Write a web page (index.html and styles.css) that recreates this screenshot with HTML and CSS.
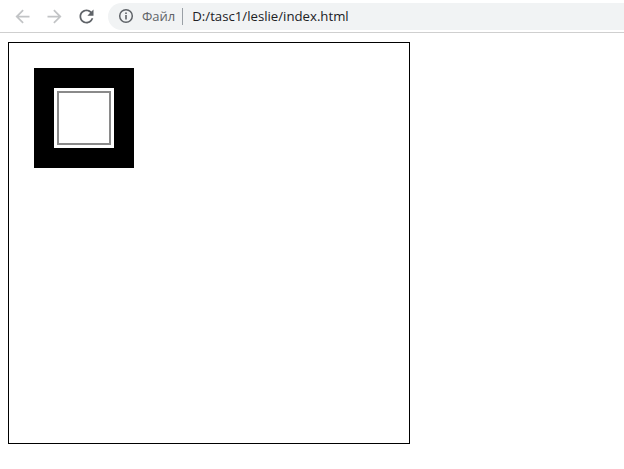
FILE: index.html
```html
<!DOCTYPE html>
<html>
<head>
<meta charset="utf-8">
<link rel="stylesheet" href="styles.css">
</head>
<body>
<div class="chrome">
  <div class="navbtn disabled">
    <svg viewBox="0 0 24 24" width="21" height="21"><path d="M20 11H7.83l5.59-5.59L12 4l-8 8 8 8 1.41-1.41L7.83 13H20v-2z"/></svg>
  </div>
  <div class="navbtn disabled">
    <svg viewBox="0 0 24 24" width="21" height="21"><path d="M12 4l-1.41 1.41L16.17 11H4v2h12.17l-5.58 5.59L12 20l8-8z"/></svg>
  </div>
  <div class="navbtn">
    <svg viewBox="0 0 24 24" width="21" height="21"><path d="M17.65 6.35C16.2 4.9 14.21 4 12 4c-4.42 0-7.99 3.58-7.99 8s3.57 8 7.99 8c3.73 0 6.84-2.55 7.730-6h-2.08c-.82 2.33-3.04 4-5.65 4-3.31 0-6-2.69-6-6s2.69-6 6-6c1.66 0 3.14.69 4.22 1.78L13 11h7V4l-2.35 2.35z"/></svg>
  </div>
  <div class="omnibox">
    <svg class="info" viewBox="0 0 16 16" width="16" height="16">
      <circle cx="8" cy="8" r="6.3" fill="none" stroke="#5f6368" stroke-width="1.5"/>
      <rect x="7.2" y="7" width="1.6" height="4.5" fill="#5f6368"/>
      <rect x="7.2" y="4.4" width="1.6" height="1.6" fill="#5f6368"/>
    </svg>
    <span class="scheme">Файл</span>
    <span class="sep"></span>
    <span class="url">D:/tasc1/leslie/index.html</span>
  </div>
</div>
<div class="page">
  <div class="stage">
    <div class="frame">
      <div class="inner"></div>
    </div>
  </div>
</div>
</body>
</html>
```

FILE: styles.css
```css
html, body {
  margin: 0;
  padding: 0;
  background: #fff;
}
body {
  width: 624px;
  height: 469px;
  overflow: hidden;
  font-family: "Open Sans", "Noto Sans", "Liberation Sans", sans-serif;
}
.chrome {
  height: 32px;
  border-bottom: 1px solid #cfcfcf;
  display: flex;
  align-items: center;
  padding-left: 12px;
  gap: 11px;
}
.navbtn {
  width: 21px;
  height: 21px;
  display: flex;
  align-items: center;
  justify-content: center;
  fill: #5f6368;
}
.navbtn.disabled {
  fill: #c2c4c6;
}
.omnibox {
  margin-left: 0;
  flex: 1;
  height: 27px;
  background: #f1f3f4;
  border-radius: 14px 0 0 14px;
  display: flex;
  align-items: center;
  padding-left: 10px;
}
.info {
  margin-right: 8px;
}
.scheme {
  font-size: 13px;
  color: #5f6368;
}
.sep {
  width: 1px;
  height: 17px;
  background: #9aa0a6;
  margin: 0 9px 0 7px;
}
.url {
  font-size: 13.2px;
  color: #202124;
}
.page {
  padding: 9px 0 0 8px;
}
.stage {
  width: 402px;
  height: 402px;
  border: 1px solid #000;
  padding: 25px;
  box-sizing: border-box;
}
.frame {
  width: 100px;
  height: 100px;
  border: 20px solid #000;
  background: #fff;
  padding: 3px;
  box-sizing: border-box;
}
.inner {
  width: 100%;
  height: 100%;
  box-sizing: border-box;
  border: 2px solid #8a8a8a;
}
```
